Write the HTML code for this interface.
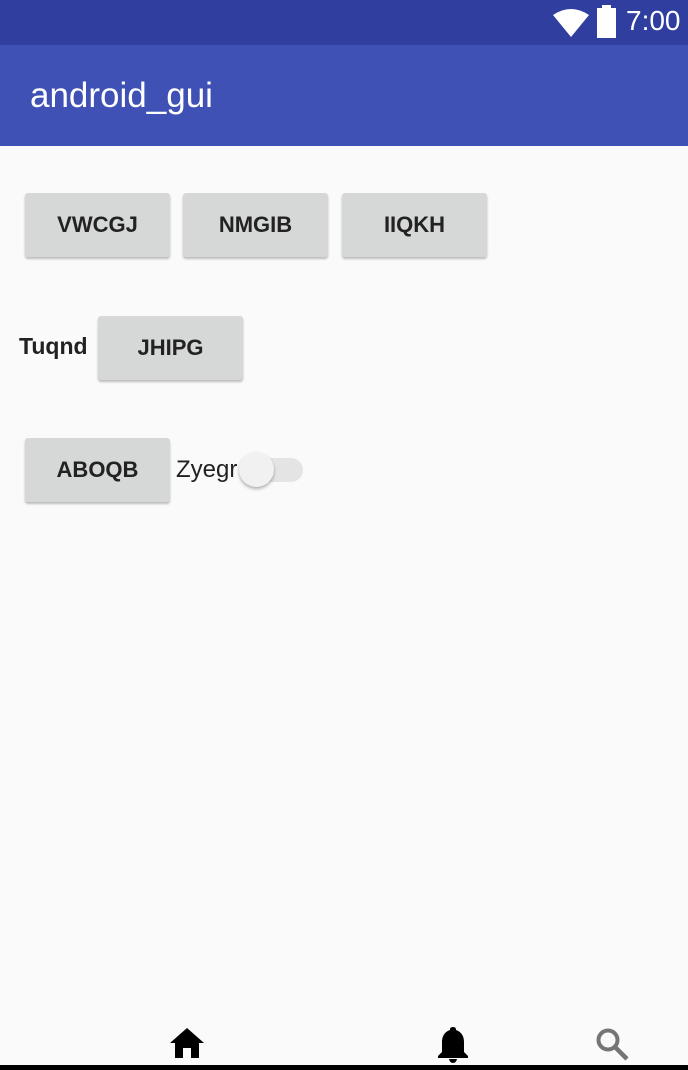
<!DOCTYPE html>
<html><head><style>
body{margin:0;width:688px;height:1070px;background:#fafafa;position:relative;overflow:hidden;font-family:"Liberation Sans",Roboto,sans-serif}
.sb{position:absolute;left:0;top:0;width:688px;height:45px;background:#303f9f}
.ab{position:absolute;left:0;top:45px;width:688px;height:101px;background:#3f51b5}
.title{position:absolute;left:30px;top:76px;color:#fff;font-size:35px}
.btn{position:absolute;width:145px;height:64px;background:#d6d7d7;border-radius:3px;box-shadow:0 2px 2px rgba(0,0,0,.25);color:#222;font-size:22px;display:flex;align-items:center;justify-content:center;font-weight:bold}
.t{position:absolute;font-size:23px;color:#222}
</style></head><body>
<div class="sb"></div>
<svg style="position:absolute;left:552px;top:6px" width="40" height="32"><path d="M1 9 Q19 -3 37 9 L19 31 Z" fill="#fff"/></svg>
<div style="position:absolute;left:597px;top:8px;width:19px;height:30px;background:#fff"></div>
<div style="position:absolute;top:5px;width:9px;height:4px;left:602px;background:#fff"></div>
<div style="position:absolute;left:626px;top:5px;color:#fff;font-size:28px">7:00</div>
<div class="ab"></div>
<div class="title">android_gui</div>
<div class="btn" style="left:25px;top:193px">VWCGJ</div>
<div class="btn" style="left:183px;top:193px">NMGIB</div>
<div class="btn" style="left:342px;top:193px">IIQKH</div>
<div class="t" style="left:19px;top:333px;font-weight:bold">Tuqnd</div>
<div class="btn" style="left:98px;top:316px">JHIPG</div>
<div class="btn" style="left:25px;top:438px">ABOQB</div>
<div class="t" style="left:176px;top:456px;font-size:24px">Zyegr</div>
<div style="position:absolute;left:243px;top:458px;width:60px;height:24px;border-radius:12px;background:#e4e4e4"></div>
<div style="position:absolute;left:239px;top:452px;width:35px;height:35px;border-radius:50%;background:#f1f1f1;box-shadow:0 2px 3px rgba(0,0,0,.3)"></div>
<svg style="position:absolute;left:169px;top:1027px" width="36" height="32" viewBox="0 0 36 32"><path d="M18 1 L35 16 L30 16 L30 31 L22 31 L22 21 L14 21 L14 31 L6 31 L6 16 L1 16 Z" fill="#000"/></svg>
<svg style="position:absolute;left:437px;top:1026px" width="32" height="38" viewBox="0 0 32 38"><path d="M16 1 C13 1 13 3 13 4 C7 6 5 11 5 16 L5 26 L1 30 L1 32 L31 32 L31 30 L27 26 L27 16 C27 11 25 6 19 4 C19 3 19 1 16 1 Z M12 33 L20 33 Q19 37 16 37 Q13 37 12 33 Z" fill="#000"/></svg>
<svg style="position:absolute;left:595px;top:1027px" width="36" height="36" viewBox="0 0 36 36"><circle cx="13" cy="13" r="9.5" stroke="#757575" stroke-width="4" fill="none"/><path d="M20 20 L32 32" stroke="#757575" stroke-width="4.5"/></svg>
<div style="position:absolute;left:0;top:1065px;width:688px;height:5px;background:#000"></div>
</body></html>
